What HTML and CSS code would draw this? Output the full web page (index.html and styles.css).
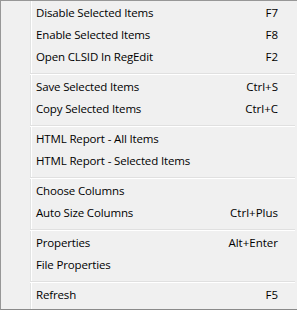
FILE: index.html
```html
<!DOCTYPE html>
<html>
<head>
<meta charset="utf-8">
<link rel="stylesheet" href="styles.css">
</head>
<body>
<div class="menu">
  <div class="item"><span class="label">Disable Selected Items</span><span class="key">F7</span></div>
  <div class="item"><span class="label">Enable Selected Items</span><span class="key">F8</span></div>
  <div class="item"><span class="label">Open CLSID In RegEdit</span><span class="key">F2</span></div>
  <div class="sep"></div>
  <div class="item"><span class="label">Save Selected Items</span><span class="key">Ctrl+S</span></div>
  <div class="item"><span class="label">Copy Selected Items</span><span class="key">Ctrl+C</span></div>
  <div class="sep"></div>
  <div class="item"><span class="label">HTML Report - All Items</span></div>
  <div class="item"><span class="label">HTML Report - Selected Items</span></div>
  <div class="sep"></div>
  <div class="item"><span class="label">Choose Columns</span></div>
  <div class="item"><span class="label">Auto Size Columns</span><span class="key">Ctrl+Plus</span></div>
  <div class="sep"></div>
  <div class="item"><span class="label">Properties</span><span class="key">Alt+Enter</span></div>
  <div class="item"><span class="label">File Properties</span></div>
  <div class="sep"></div>
  <div class="item"><span class="label">Refresh</span><span class="key">F5</span></div>
</div>
</body>
</html>
```
FILE: styles.css
```css
html, body {
  margin: 0;
  padding: 0;
  background: #f0f0f0;
}
.menu {
  box-sizing: border-box;
  width: 297px;
  height: 310px;
  border-top: 1px solid #979797;
  border-left: 1px solid #979797;
  border-bottom: 1px solid #8a8a8a;
  padding: 2px 0 2px 0;
  background:
    linear-gradient(to right, transparent 29px, #e2e3e3 29px, #e2e3e3 30px, #ffffff 30px, #ffffff 31px, transparent 31px),
    #f0f0f0;
  font-family: "Open Sans", "Liberation Sans", Arial, sans-serif;
  font-size: 11.5px;
  line-height: 16px;
  letter-spacing: -0.15px;
  color: #000;
  display: flex;
  flex-direction: column;
}
.item {
  box-sizing: border-box;
  height: 22px;
  display: flex;
  align-items: center;
  justify-content: space-between;
  padding: 0 19px 3px 35px;
}
.key {
  letter-spacing: 0;
}
.sep {
  height: 8px;
  margin: 0 2px 0 29px;
  background: linear-gradient(to bottom, transparent 4px, #e0e0e0 4px, #e0e0e0 5px, #ffffff 5px, #ffffff 6px, transparent 6px);
}
```
